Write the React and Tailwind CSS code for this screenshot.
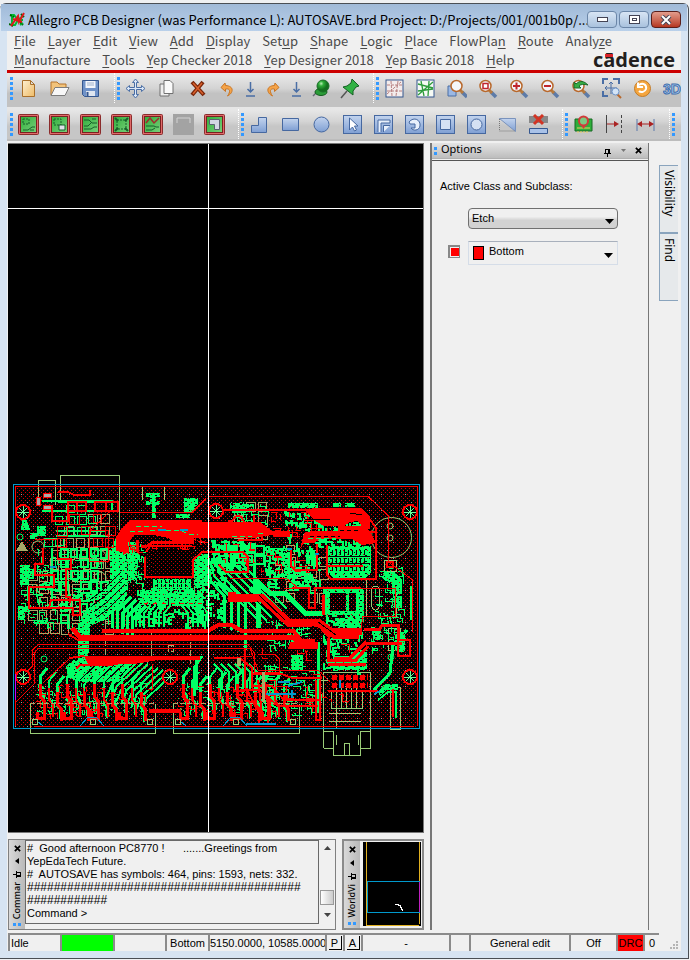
import { useState } from 'react'
import clsx from 'clsx'

const SANS = "font-['Noto_Sans',sans-serif]"
const MENU = "font-['Noto_Sans_CJK_SC',sans-serif]"
const UI = "font-['Liberation_Sans',sans-serif]"

// [before, hotkey letter, after]
const MENU_ROWS = [
  [
    ['', 'F', 'ile'], ['', 'L', 'ayer'], ['', 'E', 'dit'], ['', 'V', 'iew'], ['', 'A', 'dd'],
    ['', 'D', 'isplay'], ['Set', 'u', 'p'], ['', 'S', 'hape'], ['', 'L', 'ogic'], ['', 'P', 'lace'],
    ['FlowPla', 'n', ''], ['', 'R', 'oute'], ['Analy', 'z', 'e'],
  ],
  [
    ['', 'M', 'anufacture'], ['', 'T', 'ools'], ['', 'Y', 'ep Checker 2018'],
    ['', 'Y', 'ep Designer 2018'], ['', 'Y', 'ep Basic 2018'], ['', 'H', 'elp'],
  ],
]

const FILE_TOOLS = ['new', 'open', 'save']
const EDIT_TOOLS = ['move', 'copy', 'delete', 'undo', 'down', 'redo', 'down2', 'ball', 'pin']
const VIEW_TOOLS = ['unrats', 'rats', 'zoomPoints', 'zoomFit', 'zoomIn', 'zoomOut', 'zoomPrev', 'zoomCenter', 'refresh', 'threeD']
const MODE_TOOLS = ['mode1', 'mode2', 'mode3', 'mode4', 'mode5', 'modeOff', 'mode6']
const SHAPE_TOOLS = ['shapeAdd', 'shapeRect', 'shapeCircle', 'shapeSelect', 'shapeL', 'shapeVoid', 'voidRect', 'voidCircle', 'shapeEdit', 'islands']
const DRC_TOOLS = ['board', 'dimRight', 'dimension']

const BLUE = '#4a6ea5'

function Lens({ children }) {
  return (
    <>
      <path d="M14 14l5 5" stroke="#5d7ba8" strokeWidth="3.500" />
      <path d="M12 12l3 3" stroke="#b87a3c" strokeWidth="3" />
      <circle cx="8.500" cy="8" r="5.500" fill="#f4f6fa" stroke="#b8682c" strokeWidth="1.500" />
      {children}
    </>
  )
}

function Mode({ children }) {
  return (
    <>
      <rect x=".5" y=".5" width="20" height="20" rx="1" fill="#e06a6a" stroke="#8a2c2c" />
      <rect x="2.500" y="2.500" width="16" height="16" fill="url(#modeFill)" stroke="#7a2020" />
      <g fill="none" stroke="#17602a">{children}</g>
    </>
  )
}

const BlueBox = ({ children }) => (
  <>
    <rect x="1.500" y="1.500" width="18" height="18" fill="url(#blueFill)" stroke="#4668a0" />
    {children}
  </>
)

const downArrow = (
  <path d="M10.500 4v10M7.500 11l3 3 3-3M6 18h9" fill="none" stroke={BLUE} strokeWidth="1.500" />
)

const ICONS = {
  new: <path d="M4.500 2.500h8l4 4v12h-12zM12.500 2.500v4h4" fill="url(#gold)" stroke="#a9702b" />,
  open: (
    <>
      <path d="M2 17V4h6l2 2h7v3" fill="#f2c37b" stroke="#b5752c" />
      <path d="M2 17.500l4-8h14l-4 8z" fill="#f7f7f7" stroke="#7c7c7c" />
    </>
  ),
  save: (
    <>
      <path d="M2.500 2.500h16v16h-14l-2-2z" fill="#6f92c8" stroke="#35578f" />
      <path d="M5.500 3h10v7h-10z" fill="#f3f6fb" />
      <path d="M7 5h7M7 7h7" stroke="#9fb1cc" />
      <path d="M6 13h9v5H6z" fill="#dfe6f0" />
      <path d="M7.500 14v4" stroke="#35578f" strokeWidth="2" />
    </>
  ),
  move: (
    <path
      d="M10.500 1l3 3.500h-2v5h5v-2l3.500 3-3.500 3v-2h-5v5h2l-3 3.500-3-3.500h2v-5h-5v2L1 10.500l3.500-3v2h5v-5h-2z"
      fill="#dce8f8" stroke={BLUE}
    />
  ),
  copy: (
    <>
      <path d="M4 6h6l3 3v9H4z" fill="#eee" stroke="#707070" />
      <path d="M8 2.500h6l3 3v10H8z" fill="#fafafa" stroke="#707070" />
    </>
  ),
  delete: (
    <>
      <path d="M5 4l12 13M16 4L5 17" stroke="#7a260a" strokeWidth="4" />
      <path d="M6 5l10 11M15 5L6 16" stroke="#d9602c" strokeWidth="1.500" />
    </>
  ),
  undo: <path d="M9 5L5 9.500l4.500 4V11c5-1 5 3 2 7 6-3 7-10-2-10.500z" fill="#f5a347" stroke="#c87524" />,
  redo: <path d="M12 5l4 4.500-4.500 4V11c-5-1-5 3-2 7-6-3-7-10 2-10.500z" fill="#f5a347" stroke="#c87524" />,
  down: downArrow,
  down2: downArrow,
  ball: (
    <>
      <path d="M6 14l-4 4" stroke="#667" strokeWidth="1.500" />
      <ellipse cx="10" cy="14" rx="6" ry="3.500" fill="#2b9c38" stroke="#145c1e" />
      <circle cx="12" cy="8" r="6" fill="url(#greenBall)" stroke="#1b6e27" />
    </>
  ),
  pin: (
    <>
      <path d="M8 13l-6 7" stroke="#555" strokeWidth="1.500" />
      <path d="M13 1l7 7-3 1-3 4v4L4 9l4-1 4-3z" fill="#31b244" stroke="#156023" />
    </>
  ),
  unrats: (
    <>
      <rect x="2" y="2" width="17" height="17" fill="#f3ecec" stroke="#34578e" />
      <path d="M3 7h15M3 13h15M7 3l1 15M14 3l-2 15M3 16l14-12" stroke="#b78080" strokeDasharray="3 1" />
    </>
  ),
  rats: (
    <>
      <rect x="2" y="2" width="17" height="17" fill="#f6faf5" stroke="#34578e" />
      <path d="M3 6l15 4M3 13l15-2M6 3l3 15M14 3l-1 15M3 17L18 4" stroke="#2d9c3c" strokeWidth="1.300" />
    </>
  ),
  zoomPoints: (
    <>
      <path d="M2 8h8v10H2z" fill="#9bb8e4" stroke={BLUE} />
      <g transform="translate(2 0)"><Lens /></g>
    </>
  ),
  zoomFit: <Lens><path d="M6 5.500h5v5H6z" fill="#fff" stroke="#c0262c" strokeWidth="1.500" /></Lens>,
  zoomIn: <Lens><path d="M5 8h7M8.500 4.500v7" stroke="#c0262c" strokeWidth="2" /></Lens>,
  zoomOut: <Lens><path d="M5 8h7" stroke="#c0262c" strokeWidth="2" /></Lens>,
  zoomPrev: <Lens><path d="M4 10V4l2 2c4-4 8-3 12 1-4-1-7-1-9 1l2 2z" fill="#35ad45" stroke="#1c6b29" /></Lens>,
  zoomCenter: (
    <>
      <path d="M2 6V1h5M12 1h6v5M2 13v5h5" fill="none" stroke={BLUE} strokeWidth="2" />
      <path d="M10 4v12M4 10h12M8 6l2-2 2 2M6 8l-2 2 2 2" fill="none" stroke={BLUE} />
      <path d="M16 16l4 4" stroke="#b8682c" strokeWidth="2" />
      <circle cx="14.500" cy="13.500" r="3.500" fill="#d4e4f6" stroke="#6d93c7" />
    </>
  ),
  refresh: (
    <>
      <circle cx="10.500" cy="10.500" r="8" fill="#f5a63f" stroke="#c37c29" />
      <path d="M7 7c4-3 8 0 7 4-1 3-5 4-7 2M6 4.500v4.500h5" fill="none" stroke="#fff" strokeWidth="2" />
    </>
  ),
  threeD: (
    <text x="0" y="16" fontSize="14" fontWeight="700" fontFamily="Liberation Sans" fill="#b4d0f0" stroke="#3f6fae">3D</text>
  ),
  mode1: <Mode><path d="M5 5h6v5H5z" strokeDasharray="2 1" /><path d="M5 16h5l4-3h3M12 16h4" /></Mode>,
  mode2: <Mode><path d="M5 5h7v6H5z" strokeDasharray="2 1" /><path d="M10 11h6v5h-6z" fill="#dfe2ea" /></Mode>,
  mode3: <Mode><path d="M4 6h5l3 3h5M4 12h4l3-3M4 15h7l3-2h3M12 5h4" /></Mode>,
  mode4: <Mode><path d="M6 6h9v9H6z" strokeDasharray="2 1" /><path d="M4 4l3 3M17 4l-3 3M4 17l3-3M17 17l-3-3" strokeWidth="2" /></Mode>,
  mode5: <Mode><path d="M4 9l4-5 4 5 5-5" stroke="#a02c2c" strokeWidth="1.500" /><path d="M4 12h8l2 1h3M4 16h6l3-2" /></Mode>,
  modeOff: (
    <>
      <path d="M0 0h21v21H0z" fill="#a3a3a3" />
      <path d="M4 9V4h13v5" fill="none" stroke="#d3d3d3" />
    </>
  ),
  mode6: <Mode><path d="M5.500 5.500h10v10h-5v-5h-5z" fill="#d3d6e4" stroke="#5a5f70" /></Mode>,
  shapeAdd: <path d="M2.500 18.500v-7h7v-8h8v15z" fill="url(#blueFill)" stroke="#4668a0" />,
  shapeRect: <path d="M2.500 4.500h16v12h-16z" fill="url(#blueFill)" stroke="#4668a0" />,
  shapeCircle: <circle cx="10.500" cy="10.500" r="7.500" fill="url(#blueFill)" stroke="#4668a0" />,
  shapeSelect: <BlueBox><path d="M7.500 4v12l3-3 2 4 2-1-2-4h3.500z" fill="#fff" stroke="#4668a0" /></BlueBox>,
  shapeL: <BlueBox><path d="M5 18V6h12v3H8v9M10.500 18v-6.500H17" fill="#e8f0fb" stroke="#4668a0" /></BlueBox>,
  shapeVoid: <BlueBox><path d="M5 8c5-6 12-2 11 4-1 5-7 5-9 2h4v-4H6z" fill="#e8f0fb" stroke="#4668a0" /></BlueBox>,
  voidRect: <BlueBox><path d="M5.500 5.500h10v10h-10z" fill="#d5e1f3" stroke="#4668a0" /></BlueBox>,
  voidCircle: <BlueBox><circle cx="10.500" cy="10.500" r="5.500" fill="#d5e1f3" stroke="#4668a0" /></BlueBox>,
  shapeEdit: (
    <>
      <path d="M2.500 4.500h16v13L2.500 4.500z" fill="url(#blueFill)" stroke="#7a93bd" />
      <path d="M2.500 5v12h15" fill="none" stroke="#777" strokeDasharray="1 1" />
    </>
  ),
  islands: (
    <>
      <path d="M1 2h19v7H1z" fill="#888" />
      <path d="M6 1l9 9M15 1l-9 9" stroke="#d23424" strokeWidth="3" />
      <path d="M1.500 14.500h18v5h-18z" fill="#a9c2e8" stroke="#35578f" />
    </>
  ),
  board: (
    <>
      <path d="M2 5h17v12H2z" fill="#2fae3a" stroke="#176b22" />
      <path d="M4 14h13M5 17v2M8 17v2M11 17v2M14 17v2" stroke="#f0d060" />
      <circle cx="10.500" cy="7" r="4.500" fill="#7cc982" stroke="#d13a3a" strokeWidth="2" />
      <path d="M8.500 12l2 3 2-3" fill="#d13a3a" />
    </>
  ),
  dimRight: (
    <>
      <path d="M2.500 1v18" stroke="#444" />
      <path d="M17.500 1v18" stroke="#444" strokeDasharray="3 2" />
      <path d="M3 10h8" stroke="#a22" />
      <path d="M10 7l5 3-5 3z" fill="#a22" />
    </>
  ),
  dimension: (
    <>
      <path d="M2 5v12M19 5v12" stroke="#5a79ab" />
      <path d="M5 10h11" stroke="#a22" />
      <path d="M2 10l5-3v6zM19 10l-5-3v6z" fill="#a22" />
    </>
  ),
}

const NARROW = ['down', 'redo', 'down2']
const MEDIUM = ['undo', 'ball']

function Toolbar({ tools, last }) {
  return (
    <div className="flex h-full shrink-0 items-center">
      <span className="ml-[3px] h-[23px] w-[3px] shrink-0 bg-[repeating-linear-gradient(#3399ff_0_3px,transparent_3px_5px)]" />
      {tools.map((t) => (
        <button
          key={t}
          aria-label={t}
          className={clsx(
            'grid h-6 shrink-0 place-items-center',
            NARROW.includes(t) ? 'w-[23px]' : MEDIUM.includes(t) ? 'w-[26px]' : 'w-[31px]',
          )}
        >
          <svg width="21" height="21" viewBox="0 0 21 21" fill="none">{ICONS[t]}</svg>
        </button>
      ))}
      {!last && <span className="ml-2 h-full border-l border-dotted border-white" />}
    </div>
  )
}

function Defs() {
  return (
    <svg className="absolute h-0 w-0" aria-hidden="true">
      <defs>
        <linearGradient id="blueFill" x1="0" y1="0" x2="0" y2="1">
          <stop offset="0" stopColor="#c3d4ee" />
          <stop offset="1" stopColor="#7f9fd3" />
        </linearGradient>
        <linearGradient id="modeFill" x1="0" y1="0" x2="1" y2="1">
          <stop offset="0" stopColor="#2fae3a" />
          <stop offset="1" stopColor="#7ad07c" />
        </linearGradient>
        <linearGradient id="gold" x1="0" y1="0" x2="1" y2="1">
          <stop offset="0" stopColor="#fdf0d2" />
          <stop offset="1" stopColor="#eebb66" />
        </linearGradient>
        <radialGradient id="greenBall" cx=".35" cy=".3">
          <stop offset="0" stopColor="#b9f0b5" />
          <stop offset=".4" stopColor="#2fae3a" />
          <stop offset="1" stopColor="#14701f" />
        </radialGradient>
      </defs>
    </svg>
  )
}

const GREEN = '#00ff66'
const RED = '#ff0000'
const OLIVE = '#99cc77'
const KHAKI = '#a8a868'

// small deterministic generator so the routing is the same on every render
function rng(seed) {
  let s = seed
  return () => {
    s = (s * 16807) % 2147483647
    return s / 2147483647
  }
}

// short right-angled traces scattered through a region
function scatter(seed, x, y, w, h, n, len = 8) {
  const r = rng(seed)
  let d = ''
  for (let i = 0; i < n; i++) {
    const px = Math.round(x + r() * w) + 0.5
    const py = Math.round(y + r() * h) + 0.5
    const dx = Math.round(r() * len)
    const dy = Math.round(r() * len)
    d += r() > 0.5 ? `M${px} ${py}h${dx}v${dy}` : `M${px} ${py}v${dy}h${dx}`
  }
  return d
}

// component outlines on a loose grid
function frames(seed, x, y, cols, rows, cw, ch, skip = 0.2) {
  const r = rng(seed)
  let d = ''
  for (let j = 0; j < rows; j++) {
    for (let i = 0; i < cols; i++) {
      if (r() < skip) continue
      const w = cw - 2 - Math.round(r() * 2)
      const h = ch - 2 - Math.round(r() * 2)
      d += `M${x + i * cw + 0.5} ${y + j * ch + 0.5}h${w}v${h}h${-w}z`
    }
  }
  return d
}

// n copies of a trace, each moved by (sx, sy)
function bus(points, n, sx, sy) {
  let d = ''
  for (let i = 0; i < n; i++) {
    d += points.map(([px, py], k) => `${k ? 'L' : 'M'}${px + i * sx} ${py + i * sy}`).join('')
  }
  return d
}

// horizontal rows over the board area; dashed to give staggered dots
function rows(step, shift) {
  let d = ''
  for (let y = 486, i = 0; y < 728; y += step, i++) {
    d += `M${15 + (i % 2) * shift} ${y + 0.5}H419`
  }
  return d
}

const GREEN_FILLS = [
  'M110 550l6-12h10v12l2 40-4 12-20 18-14 6-2 36h-10v-38l8-14 22-16 2-14z',
  'M124 526l14-4h24l40 2-4 8-40 2-30 0z',
  'M146 493h14v4h-4v4h4v4h-4v13h-4v-13h-6v-4h4v-4h-4z',
  'M184 498h14v6l-6 8h-8zM176 514h14v4h-14z',
  'M288 503h30v5h-30zM333 503h8v4h-8zM345 503h10v4h-10z',
  'M327 546h44v26l-6 6h-32l-6-6z',
  'M323 589h40v4h-40zM323 590h7v22h-7zM346 590h3v22h-3zM356 590h8v32h-8zM323 611h40v4h-40z',
  'M234 504h20v3h-8v6h-14v-4z',
  'M66 666l8-6h36l28 2-20 20h-38l-12-4z',
  'M153 579h38v11h-38zM140 592l8-2h14l6 8v6h-28zM172 598l6-6h16l8 6v8h-30z',
  'M127 542h12v14l-3 24h-8zM193 560l9-6h6l2 30-16 6z',
  'M291 655h12v16h-12zM355 650h12v20h-34v-14h22z',
  'M384 572h10l8 8v14h-10v-10l-10-6zM394 596h8v12h-8z',
  'M395 632h10v20h-10zM373 630h8v10h-8z',
  'M335 618h26v8h-26zM284 552h8v28h-8zM270 548h20v3h-20z',
  'M378 692l6-8h14v6h-12l-6 6z',
  'M22 520h5l3 10h-9zM37 526h9v10h-9zM30 533h7v6h-7zM73 594h10v7H73zM86 592h12v8H86z',
  'M20 565h10v4h4v10h-6v6h-8zM18 606h12v6h-5v8h-7zM40 584h12v6H40zM34 620h14v4H34z',
]

const RED_FILLS = [
  'M122 528l8-8h72v2h58l12 9v4l-18 3h-60v6h-16l-10-6-14-3h-20l-6 8v10l-12-2v-14z',
  'M305 511l8-3h48l9 9v12h-6l-6-8-8 1-6 4h-20l-10-6z',
  'M304 533l8-2h26v-5h26l6 5 6 12-14 2-10-6h-32l-6 4h-10l-4 6z',
  'M290 642h28v7h-30z',
  'M84 656h116v4h-42l-24 4H88z',
  'M330 628h32v7h-26l-8-3z',
  'M268 531h22v6h-16zM228 520h4v10h-4z',
]

function Fiducial({ x, y }) {
  return (
    <g fill="none">
      <circle cx={x} cy={y} r="7" stroke={RED} strokeWidth="2" fill="#000" />
      <path d={`M${x - 6} ${y}h12M${x} ${y - 6}v12M${x - 4} ${y - 4}l8 8M${x - 4} ${y + 4}l8-8`} stroke="#66ff99" />
    </g>
  )
}

function Connector({ x, seed }) {
  const cols = [0, 9, 17, 27, 36, 44, 54, 64, 72, 82, 92, 101]
  return (
    <g fill="none">
      <path d={scatter(seed, x, 682, 108, 30, 110, 5)} stroke={GREEN} />
      {cols.map((c, i) => (
        <path
          key={c}
          d={`M${x + c + 12} ${668 + (i % 3) * 4}l-7 9v${14 + (i % 4) * 3}l3 4v10`}
          stroke={GREEN}
          strokeWidth={i % 2 ? 2 : 3}
        />
      ))}
      {cols.map((c, i) => (
        <path
          key={c}
          d={`M${x + c + 5} ${684 + (i % 3) * 4}v12l4 5v12${i % 3 ? '' : 'v5h-7v-6'}`}
          stroke={RED}
          strokeWidth={i % 3 === 1 ? 2 : 3}
        />
      ))}
      <path d={scatter(seed + 9, x, 684, 110, 30, 50, 6)} stroke={RED} />
      <path d={`M${x - 5} 703.500h126`} stroke={KHAKI} strokeDasharray="5 2" />
      <path d={`M${x + 8} 726l-6-5M${x + 45} 726l8-9h8l8 9z`} stroke="#0099cc" />
      <circle cx={x} cy="722" r="3" stroke={OLIVE} />
      <circle cx={x + 58} cy="722" r="3" stroke={OLIVE} />
      <circle cx={x + 115} cy="722" r="3" stroke={OLIVE} />
    </g>
  )
}

function Board() {
  return (
    <svg
      className="block overflow-visible"
      width="415"
      height="688"
      viewBox="8 144 415 688"
      shapeRendering="crispEdges"
      role="img"
      aria-label="Board layout"
    >
      <defs>
        <clipPath id="pour"><path d={GREEN_FILLS.join('')} /></clipPath>
      </defs>

      {/* plane texture */}
      <path d={rows(2, 2)} stroke="#d80000" strokeDasharray="1 3" />
      <path d={rows(8, 6)} stroke="#999" strokeDasharray="1 11" />

      {/* silkscreen outlines */}
      <g fill="none" stroke={OLIVE}>
        <path d="M38.500 505v-25h17v25M60.500 500v-25h59v55M142.500 500v-14h22v14M30.500 704v29h125v-29M173.500 704v29h126v-29" />
        <path d="M323.500 748v-76h47v76h-10M323.500 731h10v24h27v-24h10M323.500 748h10M344.500 755v-12h5v12M336.500 745v-10M358.500 745v-10" />
        <path d="M329 713.500h32M329 721.500h32M331.500 690v18h31v-18M336.500 688v20M341.500 688v20M346.500 688v20M351.500 688v20M356.500 688v20" />
        <path d="M390.500 729v-42h10v42zM388.500 628.500h12v22h-12zM384.500 560.500h12v11h-12zM336.500 688v40M318 680.500h10" />
        <path d="M371.500 592c0-8 8-8 8 0v12c0 8-8 8-8 0zM366.500 580v36h30v-26" />
      </g>
      <g fill="none" stroke={KHAKI}>
        <path d={frames(61, 52, 514, 5, 4, 12, 12)} />
        <path d={frames(62, 28, 558, 8, 6, 11, 13)} />
        <path d={frames(63, 234, 502, 3, 3, 12, 13)} />
        <path d={frames(64, 275, 545, 5, 5, 11, 12, 0.4)} />
        <path d="M105.500 632v24h46v-24M151.500 656v-25M190.500 664v-44M245.500 620v30M168.500 645.500h5v6h-5z" strokeDasharray="6 2" />
      </g>
      <g fill="none" stroke={OLIVE} shapeRendering="auto">
        <circle cx="391.500" cy="537.500" r="20" />
        <circle cx="38" cy="547" r="6" />
        <circle cx="99" cy="557" r="7" />
        <circle cx="100" cy="578" r="6" />
        <circle cx="390" cy="526" r="3" />
        <circle cx="390" cy="538" r="3" />
        <circle cx="20" cy="537" r="3" stroke={GREEN} />
        <circle cx="44" cy="659" r="3" stroke={GREEN} />
        <circle cx="391" cy="657" r="3" stroke={GREEN} />
      </g>

      {/* green copper */}
      <path d={GREEN_FILLS.join('')} fill={GREEN} />
      <g fill="none" stroke={GREEN}>
        <path d={frames(71, 44, 505, 6, 4, 11, 11, 0.5)} />
        <path d={frames(72, 50, 548, 6, 7, 10, 11, 0.35)} strokeWidth="2" />
        <path d={frames(73, 218, 545, 4, 3, 12, 10, 0.4)} strokeWidth="2" />
        <path d={scatter(12, 36, 548, 66, 76, 110, 8)} />
        <path d={scatter(13, 20, 560, 24, 60, 44, 6)} />
        <path d={scatter(14, 126, 542, 16, 42, 50, 6)} />
        <path d={scatter(15, 210, 540, 40, 28, 90, 7)} strokeWidth="2" />
        <path d={scatter(16, 230, 502, 36, 30, 90, 6)} />
        <path d={scatter(17, 264, 545, 50, 40, 130, 7)} strokeWidth="2" />
        <path d={scatter(18, 196, 556, 26, 60, 70, 6)} strokeWidth="2" />
        <path d={scatter(19, 136, 588, 66, 34, 100, 6)} strokeWidth="2" />
        <path d={scatter(20, 266, 618, 40, 28, 60, 7)} />
        <path d={scatter(21, 262, 664, 52, 50, 90, 8)} />
        <path d={scatter(22, 374, 566, 26, 50, 40, 7)} />
        <path d={scatter(23, 284, 508, 74, 34, 100, 6)} strokeWidth="2" />
        <path d={scatter(24, 322, 612, 36, 56, 110, 6)} strokeWidth="2" />
        <path d={scatter(25, 140, 586, 64, 10, 40, 5)} strokeWidth="2" />
        <path d={scatter(26, 370, 612, 30, 36, 40, 6)} />
        <path d="M42 500.500h70v10h-70M58 501.500h48M56 530.500h50M56 535.500h50M52 548v60M66 560v44" strokeWidth="2" />
        <path d={bus([[126, 594], [112, 608], [112, 628]], 5, 5, 3)} strokeWidth="3" />
        <path d={bus([[208, 556], [214, 576], [262, 624]], 6, 5, -3)} strokeWidth="2" />
        <path d={bus([[210, 580], [224, 596], [224, 628]], 4, 7, 2)} strokeWidth="3" />
        <path d="M255 580l15 13h15l20 20h18M250 588l12 10M258 584v44" strokeWidth="5" />
        {/* escape routing under the controller */}
        <path d={bus([[150, 592], [150, 606], [144, 613], [144, 627]], 5, 5, 0)} strokeWidth="2" />
        <path d={bus([[182, 594], [182, 606], [188, 613], [188, 627]], 5, 5, 0)} strokeWidth="2" />
        <path d={bus([[124, 606], [124, 627]], 5, 4, 0)} strokeWidth="2" />
        <path d={bus([[138, 660], [112, 684], [106, 698]], 8, 5, 2)} strokeWidth="2" />
        <path d={bus([[214, 664], [222, 672], [222, 690]], 6, 7, 0)} strokeWidth="2" />
        <path d="M196 660v30M202 656l-8 12v28M245 604v46M254 560v30M374 690l16-17 3-28 14-15M318 642v70" strokeWidth="3" />
        <path d="M378 700l10-8h8v26M410.500 586v34" strokeWidth="2" />
      </g>
      <g clipPath="url(#pour)">
        <path d={rows(3, 5)} stroke="#000" strokeDasharray="2 7 1 5" />
        <path d={rows(4, 4)} stroke="#d00000" strokeDasharray="1 7" />
      </g>
      {/* gaps between parallel runs */}
      <g fill="none" stroke="#000">
        <path d={bus([[127, 590], [108, 609], [96, 618]], 4, -2, -6)} />
        <path d={bus([[332, 550], [332, 574]], 9, 4, 0)} strokeDasharray="5 3" />
        <path d={bus([[133, 664], [112, 684]], 5, -8, -1)} />
        <path d={bus([[157, 580], [157, 589]], 8, 4, 0)} strokeDasharray="3 1" />
        <path d="M328 556.500h42M328 563.500h42" />
      </g>

      <Connector x={35} seed={41} />
      <Connector x={178} seed={57} />

      {/* red copper */}
      <path d={RED_FILLS.join('')} fill={RED} />
      <g fill="none" stroke={RED}>
        <path d={frames(81, 57, 514, 5, 3, 12, 12, 0.6)} />
        <path d={scatter(52, 126, 538, 76, 10, 24, 8)} />
        <path d={scatter(53, 215, 540, 96, 34, 26, 8)} />
        <path d={scatter(54, 270, 510, 56, 24, 26, 8)} />
        <path d={scatter(55, 262, 640, 80, 70, 26, 9)} />
        <path d={bus([[332, 677], [368, 677]], 2, 0, 8)} strokeWidth="5" strokeDasharray="5 2" />
        <path d="M15.500 726V486.500H417.500V726" />
        <path d="M208 496.500h160l20 19v46l24 18v52M120 512.500h72l14-14M89.500 530.500h19v31h-19zM91 530l20-20" />
        <path d="M52 505v16h16v-19h9v9M68 502h18v9H68zM95 502h23v9H95zM106 502v9M58 492h10l6 3h16v-5" strokeWidth="2" />
        <path d="M35 539.500h22v20" />
        <path d="M43 548v16h-8v11h19v12h-25v21h20l2-8h29v15h-7v-7h-23M57 559h14v10h-5v28h4v6" strokeWidth="2" />
        <path d="M145 557v20h48v-17l9-8h41l5 5v15h-22l-7-7M146 552l4-6h42" strokeWidth="2" />
        <path d="M137 540v12M141 546l6 0 6-4h40M124 548v6" strokeWidth="3" />
        <path d="M366 514l10 14v4h-6M327 545v30l4 4h45v-47h-10M327 566h36M291 550v16l4 4h22v-26" strokeWidth="2" />
        <path d="M284 588h25v20h6v-20h80v28h-32l-2 12M230 578h56l12 10" />
        <path d="M292 588h17v20h6v-20h46" strokeWidth="2" />
        <path d="M323 595v20" strokeWidth="3" />
        <path d="M232 592v6h30l27 25h30l16 12h24" strokeWidth="8" />
        <path d="M102 630.500h107l10-6h12l10 6h52l8 10h14" strokeWidth="4" />
        <path d="M72 628l8 9h212l12 8h14" strokeWidth="5" />
        <path d="M68 634l10 6h130" strokeWidth="2" />
        <path d="M16 672.500h10l6-6v-16l7-6.500h168M16 702l18-18v-30l4-5.500h170M208 644.500h40l6 8v20h25v-14l-4-4h-17" />
        <path d="M208 648h42l8 22h60l12 12M69 659l-26 24M152 664v25h-4M240 656h12" />
        <path d="M140 659l-30 6h-30l-4 4M84 656l-15 2" strokeWidth="2" />
        <path d="M150 710h30v2h-30zM214 658h26l12 10v18h20l12 14h35M252 674h30l10 4h30M240 690h20l18 16h40" strokeWidth="2" />
        <path d="M318 624l10 12v24h28l12-14M328 664h38M334 658h16l16-16M364 643h38M364 629h16l2-4h16v14" strokeWidth="3" />
        <path d="M245 649v38l14 26v12M258 680l4 34M268 697v28M316 680v40h4v-40M328 691h50M393 689v28" strokeWidth="2" />
        <path d="M34 726.500h380" />
        <path d="M232 525c0-12 12-12 12 0v6h10v-16M262 536v4h-24M224 510h100" strokeWidth="2" />
        <path d="M387 562h6v5h-6zM398 640h12v16h-12z" strokeWidth="2" />
        <path d={bus([[144, 603], [148, 603]], 7, 9, 0)} />
      </g>
      <g fill="none" stroke="#000">
        <path d="M257 601l27 25M259 595l26 25M318 622l18 13M312 626l16 12M306 519l24 1M350 513l12 2" />
        <path d="M310 536h30M340 530h20M136 537.500h20" strokeDasharray="4 3" />
      </g>

      {/* package body and pads */}
      <path d="M153 550h39v25h-39z" fill="#000" />
      <path d={bus([[153, 551.5], [192, 551.5]], 6, 0, 4)} stroke="#c80000" strokeDasharray="1 3" />
      <path d={bus([[155, 553.5], [192, 553.5]], 6, 0, 4)} stroke="#c80000" strokeDasharray="1 3" />
      <path d="M36 497h4v8h-4zM43 493h8v4h-8zM43 505h8v4h-8z" fill="#aaa" stroke={RED} />
      <path d="M136 526h26M130 531h14M150 530h30l8 4h10M232 536h20M308 538h28M258 533h8" stroke={GREEN} strokeDasharray="5 3" fill="none" />
      <path d="M22 541l6 10H16zM237 658h4v8h-4zM262 672h3v30h-3z" fill={KHAKI} />
      <g fill="none" stroke="#0099cc" strokeWidth="2">
        <path d="M278 682h12M292 690v8M266 694h30M340 680v8M288 686l14-4M374 694l6-3M246 724h30M315 554h4M287 549h5M158 530h8M180 530h8M50 567h6" />
      </g>

      <Fiducial x={23} y={512} />
      <Fiducial x={216} y={511} />
      <Fiducial x={410} y={512} />
      <Fiducial x={23} y={677} />
      <Fiducial x={170} y={677} />
      <Fiducial x={410} y={677} />

      <path d="M13.500 484.500h406v244h-406z" fill="none" stroke="#0099cc" />
      <path d="M15.500 674v26" stroke="#c000ff" />
      {/* cursor */}
      <path d="M0 208.500h3000M208.500 140v3000" stroke="#fff" />
    </svg>
  )
}

function PinGlyph({ turned }) {
  return (
    <svg width="9" height="9" viewBox="0 0 9 9" className={clsx(turned ? 'rotate-90' : 'mt-[3px]')} shapeRendering="crispEdges">
      <path d="M2.500 5V1.500h4V5M1 5.500h7M4.500 6v3M5.500 2v3" fill="none" stroke="#000" />
    </svg>
  )
}

function CloseGlyph() {
  return (
    <svg width="7" height="7" viewBox="0 0 8 8">
      <path d="M1 1l6 6M7 1L1 7" stroke="#000" strokeWidth="2" />
    </svg>
  )
}

const Dots = ({ vertical }) => (
  <span className={clsx('flex gap-[2px]', vertical && 'flex-col')}>
    <i className="h-[3px] w-[3px] bg-[#3399ff]" />
    <i className="h-[3px] w-[3px] bg-[#3399ff]" />
  </span>
)

// collapsed dock caption running up the left side
function DockStrip({ title }) {
  return (
    <div className="flex w-4 shrink-0 flex-col items-center gap-1 bg-linear-to-r from-[#d9d9d9] to-[#b9b9b9] pb-[3px] pt-[5px]">
      <button aria-label="Close" className="grid h-2 place-items-center"><CloseGlyph /></button>
      <button aria-label="Collapse" className="grid h-3 place-items-center">
        <svg width="4" height="6" viewBox="0 0 4 6"><path d="M4 0v6L0 3z" /></svg>
      </button>
      <button aria-label="Pin" className="grid h-2 place-items-center"><PinGlyph turned /></button>
      <span className={clsx(SANS, 'mt-auto rotate-180 text-[9px] font-medium leading-4 [writing-mode:vertical-rl]')}>{title}</span>
      <Dots />
    </div>
  )
}

function Cell({ className, children }) {
  return (
    <div className={clsx('flex h-[18px] shrink-0 items-center justify-center whitespace-nowrap border-l-2 border-t-2 border-[#8b8b8b]', className)}>
      {children}
    </div>
  )
}

const Caret = () => (
  <svg className="pointer-events-none absolute right-1 top-1/2" width="9" height="5" viewBox="0 0 9 5">
    <path d="M0 0h9L4.500 5z" />
  </svg>
)

export default function App() {
  const [cls, setCls] = useState('Etch')
  const [sub, setSub] = useState('Bottom')
  const [command, setCommand] = useState('')

  return (
    <div className={clsx(UI, 'flex min-h-screen flex-col bg-[#eef0f2] pb-[1px] pr-[1px] pt-[3px] text-[11px] text-black')}>
      <Defs />
      <div className="flex flex-1 flex-col rounded-t-md border-b border-r border-t border-[#4a4f55] bg-[#d7e4f2] pb-[7px] pl-[7px] pr-[7px]">
        <header className={clsx(MENU, '-ml-[6px] -mr-[6px] flex h-[27px] shrink-0 items-center gap-[3px] bg-linear-to-b from-[#a0bad8] to-[#b9d0ea] pl-2 pr-[6px] pt-1')}>
          <svg width="16" height="16" viewBox="0 0 16 16" className="shrink-0">
            <path d="M1 3h4l4 5h5M2 13h4l3-5 5-4M3 2v10M11 13l3-2" fill="none" stroke="#0b3" strokeWidth="2" />
            <path d="M1 3l4 2M9 8l5 5M0 12l4 2M12 2l3 3" stroke="#060" strokeWidth="2" strokeDasharray="2 1" />
            <path d="M2 14L9 4l1 6 5-9M4 7l9 3" fill="none" stroke="#e01818" strokeWidth="2" />
          </svg>
          <h1 className="min-w-0 flex-1 whitespace-pre text-[13px] leading-5">
            Allegro PCB Designer (was Performance L): AUTOSAVE.brd Project: D:/Projects/001/001b0p/...
          </h1>
          <div className="flex gap-[2px]">
            <button aria-label="Minimize" className="grid h-[17px] w-[30px] place-items-center rounded-sm border border-[#6b86a8] bg-linear-to-b from-[#d8e5f4] to-[#a9c2de]">
              <i className="h-[5px] w-[11px] border border-[#445] bg-white" />
            </button>
            <button aria-label="Maximize" className="grid h-[17px] w-[30px] place-items-center rounded-sm border border-[#6b86a8] bg-linear-to-b from-[#d8e5f4] to-[#a9c2de]">
              <i className="grid h-[9px] w-[11px] place-items-center border border-[#445] bg-white">
                <i className="h-[3px] w-[5px] border border-[#445]" />
              </i>
            </button>
            <button aria-label="Close" className="grid h-[17px] w-[30px] place-items-center rounded-sm border border-[#5a1f1b] bg-linear-to-b from-[#e29c8c] to-[#b5351f]">
              <svg width="12" height="10" viewBox="0 0 12 10">
                <path d="M2 1l8 8M10 1L2 9" stroke="#445" strokeWidth="4" />
                <path d="M2 1l8 8M10 1L2 9" stroke="#fff" strokeWidth="2" />
              </svg>
            </button>
          </div>
        </header>

        <div className="flex flex-1 flex-col bg-[#f0f0f0]">
          <div className="border-b-3 border-[#cc0000] pb-[1px] pl-[7px] pr-[6px]">
            {MENU_ROWS.map((row, i) => (
              <nav key={i} className={clsx(MENU, 'flex h-[19px] gap-3 text-[13px] text-[#4a4a4a]')}>
                {row.map(([a, key, b]) => (
                  <button key={a + key + b} className="h-[19px] whitespace-nowrap leading-[19px]">
                    {a}<span className="underline underline-offset-2">{key}</span>{b}
                  </button>
                ))}
                {i === 1 && (
                  <span className="ml-auto font-['Open_Sans',sans-serif] text-[20px] font-bold leading-[19px] text-[#231f20]">
                    c<span className="relative">ā<i className="absolute left-[2px] top-[8px] h-[3px] w-2 bg-[#d8232a]" /></span>dence
                  </span>
                )}
              </nav>
            ))}
          </div>

          <div className="flex h-[34px] overflow-hidden bg-linear-to-b from-[#e6e6e6] from-10% via-[#d4d4d4] via-45% to-[#c2c2c2] to-60% pb-1">
            <div className="flex w-[107px] shrink-0"><Toolbar tools={FILE_TOOLS} /></div>
            <div className="flex w-[259px] shrink-0"><Toolbar tools={EDIT_TOOLS} /></div>
            <Toolbar tools={VIEW_TOOLS} last />
          </div>
          <div className="flex h-[34px] overflow-hidden border-b-2 border-[#bcbcbc] bg-linear-to-b from-[#e6e6e6] from-10% via-[#d4d4d4] via-45% to-[#c6c6c6] to-60% pt-[2px]">
            <div className="flex w-[231px] shrink-0"><Toolbar tools={MODE_TOOLS} /></div>
            <div className="flex w-[324px] shrink-0"><Toolbar tools={SHAPE_TOOLS} /></div>
            <div className="flex w-[107px] shrink-0"><Toolbar tools={DRC_TOOLS} /></div>
            <Toolbar tools={[]} last />
          </div>

          <main className="flex flex-1">
            <div className="flex min-w-0 flex-1 flex-col pl-[1px] pt-[2px]">
              <div className="min-h-[690px] flex-1 overflow-hidden border-y border-r border-[#777] bg-black">
                <Board />
              </div>
              <div className="mt-[6px] flex h-[91px] gap-[6px]">
                <section aria-label="Command" className="flex min-w-0 flex-1 border border-[#808080]">
                  <DockStrip title="Commar" />
                  <div className="mb-[5px] min-w-0 flex-1 whitespace-pre border border-[#696969] pl-[1px] pt-[1px] leading-[13px]">
                    <p>#  Good afternoon PC8770 !      .......Greetings from</p>
                    <p>YepEdaTech Future.</p>
                    <p>#  AUTOSAVE has symbols: 464, pins: 1593, nets: 332.</p>
                    <p className="text-[12px] leading-[13px]">#########################################</p>
                    <p className="text-[12px] leading-[13px]">############</p>
                    <label className="flex">
                      Command &gt;
                      <input value={command} onChange={(e) => setCommand(e.target.value)} className="h-[13px] min-w-0 flex-1 pl-1 outline-none" />
                    </label>
                  </div>
                  <div className="flex w-4 flex-col items-center py-[6px]">
                    <svg width="7" height="4" viewBox="0 0 7 4"><path d="M0 4h7L3.500 0z" fill="#444" /></svg>
                    <span className="mb-2 mt-auto h-[15px] w-[14px] border border-[#999] bg-linear-to-r from-white to-[#ccc]" />
                    <svg className="mb-[6px]" width="7" height="4" viewBox="0 0 7 4"><path d="M0 0h7L3.500 4z" fill="#444" /></svg>
                  </div>
                </section>
                <section aria-label="WorldView" className="flex w-[82px] shrink-0 border-2 border-[#8b8b8b]">
                  <DockStrip title="WorldVi" />
                  <svg className="ml-[3px] mt-[1px]" width="58" height="84" viewBox="0 0 58 84" shapeRendering="crispEdges">
                    <path d="M0 0h58v84H0z" />
                    <path d="M3.500 0v83.500H56M56.500 0v82" fill="none" stroke="#e0b020" />
                    <path d="M4.500 39.500h52v31h-52z" fill="none" stroke="#0099cc" />
                    <path d="M56.500 40v30" stroke="#c020c0" />
                    <path d="M32 62h3v1h2v2h1v2h1v2" fill="none" stroke="#fff" />
                  </svg>
                </section>
              </div>
            </div>

            <aside className="ml-[6px] mt-[2px] flex w-[219px] shrink-0 flex-col border-l-2 border-r border-[#777]">
              <div className={clsx(SANS, 'flex h-4 items-center gap-1 border-b border-[#b0b0b0] bg-linear-to-b from-[#e4e4e4] to-[#bdbdbd] pl-[2px] pr-[6px] text-[11px]')}>
                <Dots vertical />
                <h2 className="flex-1 pb-[3px] leading-3">Options</h2>
                <button aria-label="Pin"><PinGlyph /></button>
                <button aria-label="Options menu" className="mx-[5px]">
                  <svg width="5" height="3" viewBox="0 0 5 3"><path d="M0 0h5L2.500 3z" fill="#777" /></svg>
                </button>
                <button aria-label="Close"><CloseGlyph /></button>
              </div>
              <div className="mt-[1px] flex-1 border-t border-[#555] pl-2 pr-[30px] pt-[17px]">
                <label htmlFor="cls" className="block leading-4">Active Class and Subclass:</label>
                <div className="relative ml-7 mt-[14px]">
                  <select
                    id="cls"
                    value={cls}
                    onChange={(e) => setCls(e.target.value)}
                    className="block h-[21px] w-full appearance-none rounded-sm border border-[#707070] bg-linear-to-b from-[#f0f0f0] from-40% to-[#d2d2d2] to-60% pl-[3px]"
                  >
                    <option>Etch</option>
                    <option>Board Geometry</option>
                  </select>
                  <Caret />
                </div>
                <div className="ml-2 mt-3 flex items-center gap-2">
                  <button aria-label="Toggle visibility" className="mb-1 h-[13px] w-3 border-b border-r border-l-2 border-t-2 border-[#888]">
                    <span className="mx-auto block h-2 w-2 bg-[#ff0000]" />
                  </button>
                  <div className="relative flex h-6 flex-1 items-center border border-[#d5dde8] border-t-[#a8b0bc]">
                    <span className="ml-1 h-[14px] w-[11px] border border-black bg-[#ff0000]" />
                    <select
                      aria-label="Subclass"
                      value={sub}
                      onChange={(e) => setSub(e.target.value)}
                      className="h-full flex-1 appearance-none pb-1 pl-[5px]"
                    >
                      <option>Bottom</option>
                      <option>Top</option>
                    </select>
                    <Caret />
                  </div>
                </div>
              </div>
            </aside>

            <div className={clsx(SANS, 'flex w-8 shrink-0 flex-col pl-[10px] pr-[3px] pt-6 text-[12px]')}>
              <button className="h-[68px] border border-r-0 border-[#8aa4bd] bg-[#e6e9eb] pt-1 text-left leading-4 [writing-mode:vertical-rl]">Visibility</button>
              <button className="h-[68px] border border-r-0 border-[#8aa4bd] bg-[#e6e9eb] pt-1 text-left leading-4 [writing-mode:vertical-rl]">Find</button>
            </div>
          </main>

          <footer className="mt-[3px] flex h-[18px] pl-[1px]">
            <Cell className="w-[52px] justify-start! pl-[1px]">Idle</Cell>
            <Cell className="w-[53px]"><span className="h-full w-full bg-[#00ff00]" /></Cell>
            <Cell className="w-[52px]" />
            <Cell className="w-[43px]">Bottom</Cell>
            <Cell className="w-[117px] justify-start!">5150.0000, 10585.0000</Cell>
            <Cell className="w-[18px]"><button className="h-[14px] w-[13px] border-b border-r border-black leading-3">P</button></Cell>
            <Cell className="w-[18px]"><button className="h-[14px] w-[13px] border-b border-r border-black leading-3">A</button></Cell>
            <Cell className="min-w-0 flex-1">-</Cell>
            <Cell className="w-[20px]" />
            <Cell className="w-[100px]">General edit</Cell>
            <Cell className="w-[47px]">Off</Cell>
            <Cell className="w-[27px]"><span className="h-full w-full bg-[#ff0000] text-center leading-4">DRC</span></Cell>
            <Cell className="w-[16px]">0</Cell>
            <svg className="ml-[11px] mr-[2px] mt-2 shrink-0" width="9" height="9" viewBox="0 0 9 9">
              <path d="M6 0h2v2H6zM3 3h2v2H3zM6 3h2v2H6zM0 6h2v2H0zM3 6h2v2H3zM6 6h2v2H6z" fill="#b5b5b5" />
            </svg>
          </footer>
        </div>
      </div>
    </div>
  )
}
